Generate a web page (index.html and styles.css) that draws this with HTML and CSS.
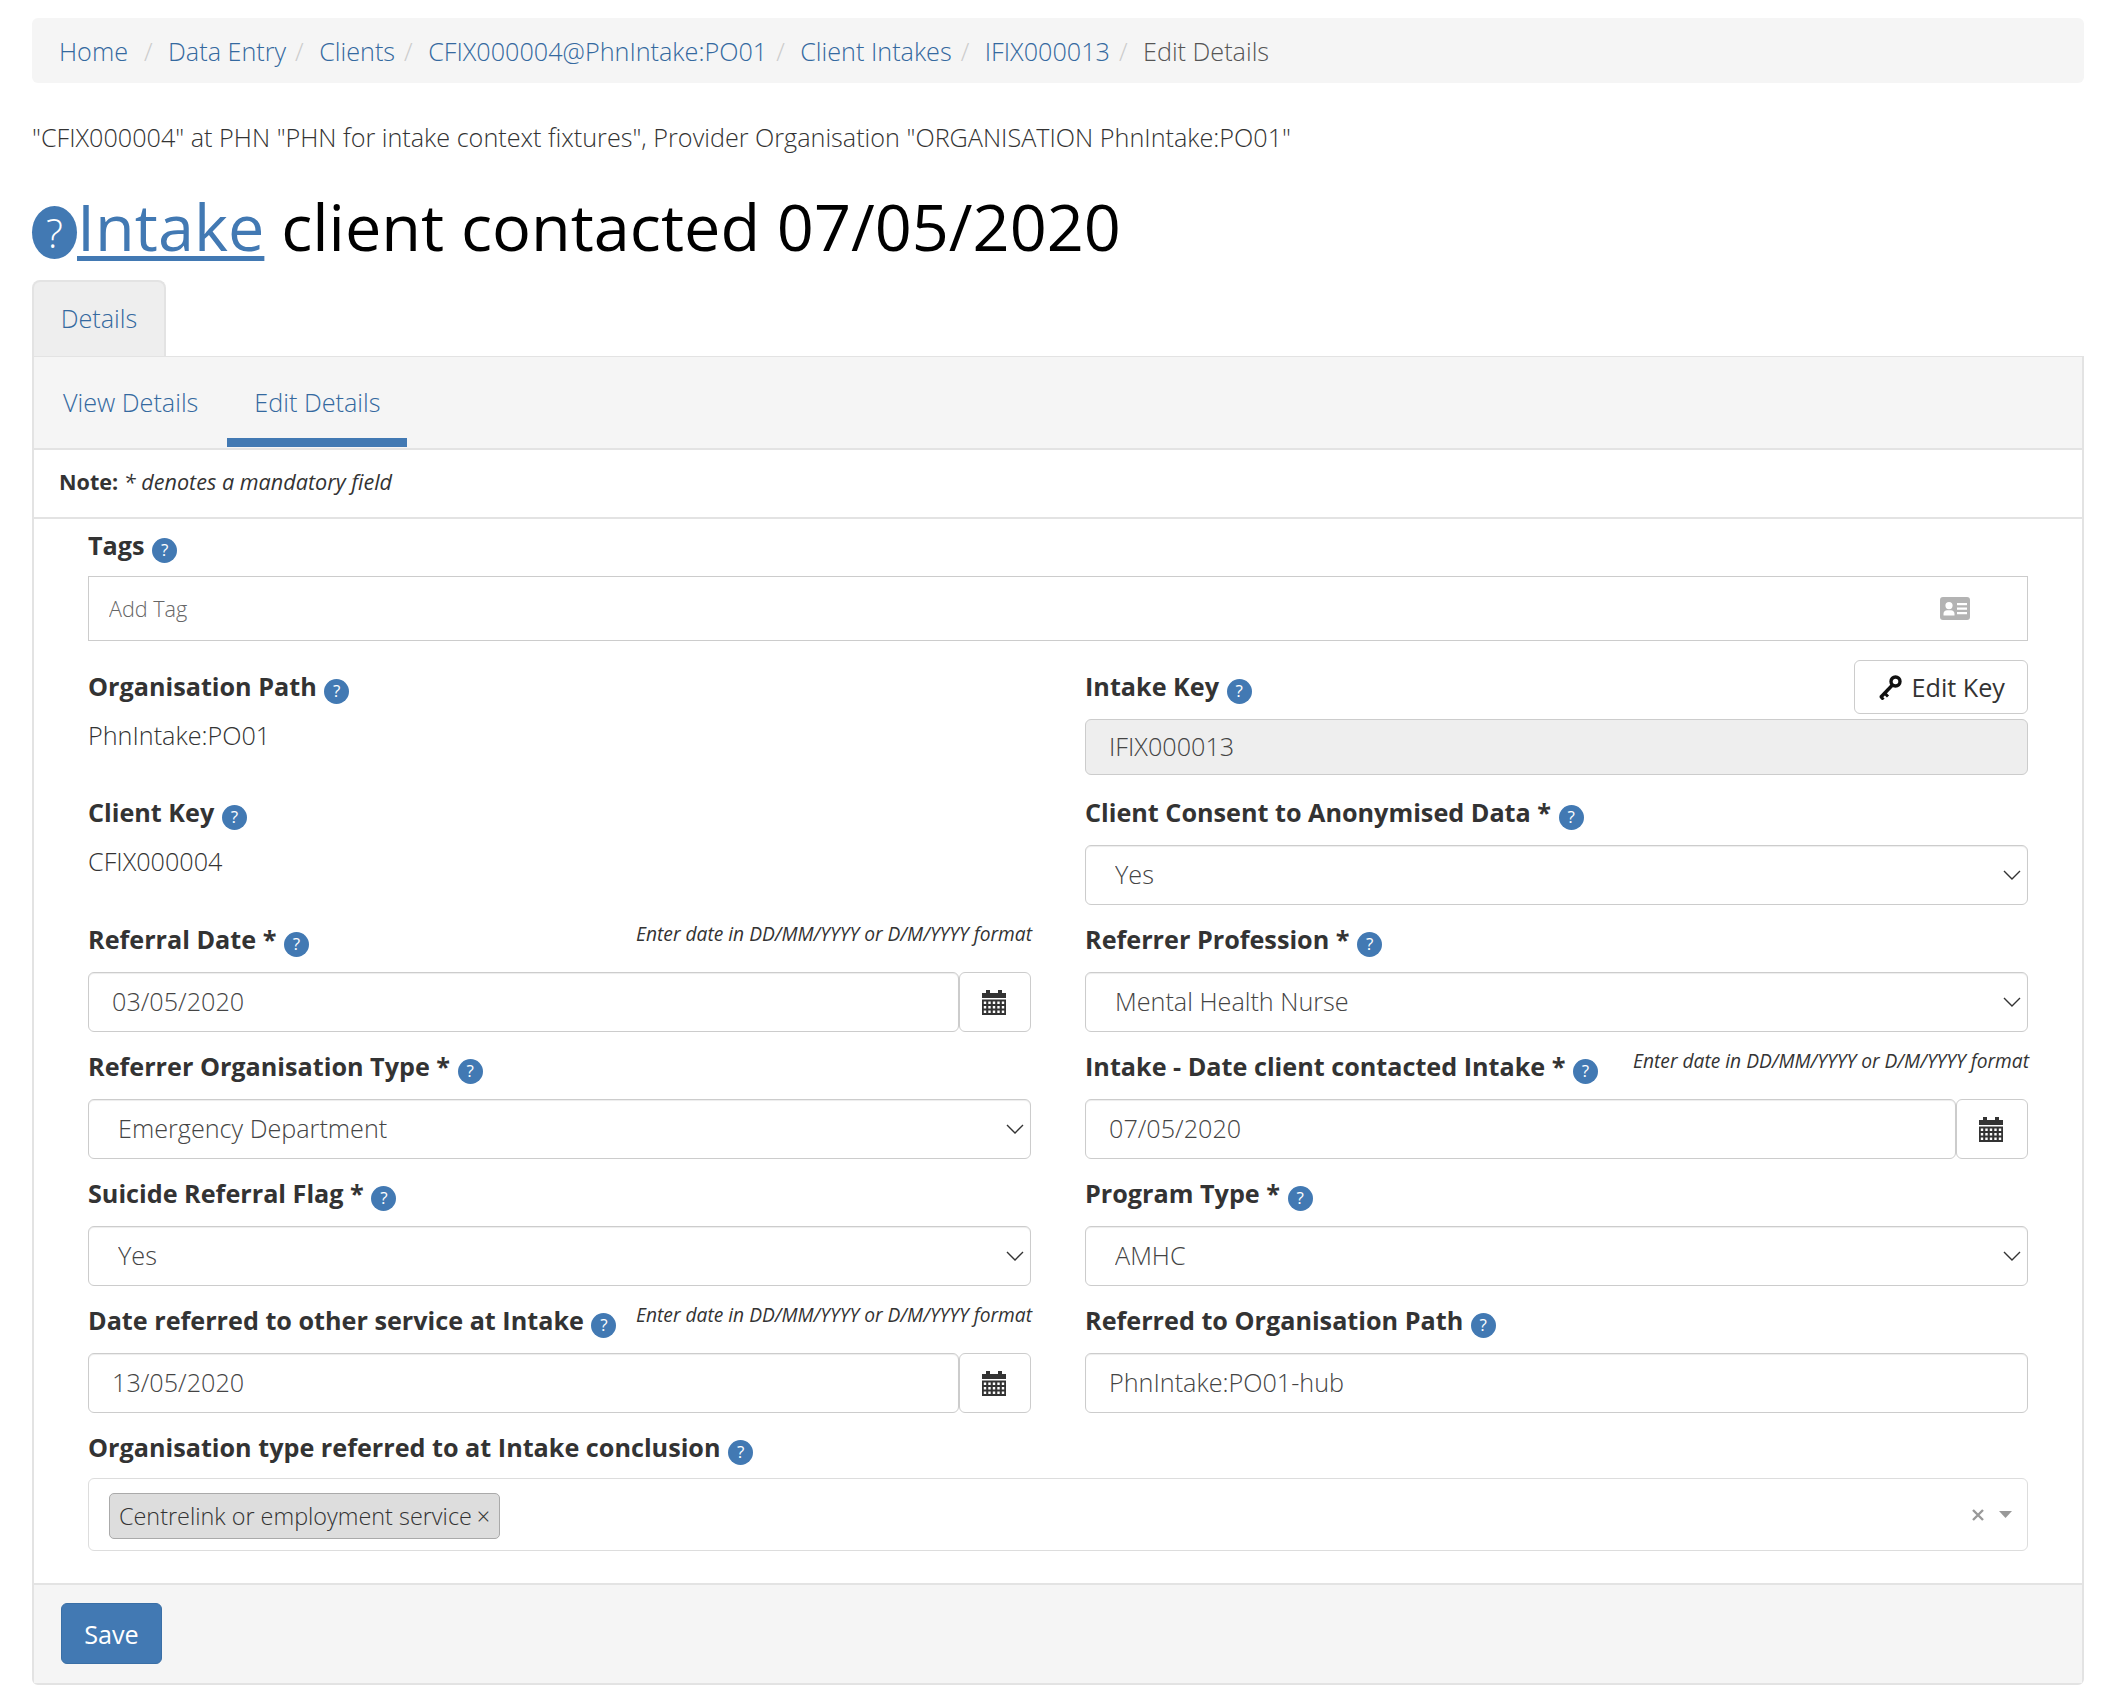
FILE: index.html
```html
<!DOCTYPE html>
<html lang="en">

<head>
    <meta charset="UTF-8">
    <title>Edit Details</title>
    <link rel="stylesheet" href="styles.css">
</head>

<body>
    <ol class="breadcrumb">
        <li><a href="#">Home</a></li>
        <li><a href="#">Data Entry</a></li>
        <li><a href="#">Clients</a></li>
        <li><a href="#">CFIX000004@PhnIntake:PO01</a></li>
        <li><a href="#">Client Intakes</a></li>
        <li><a href="#">IFIX000013</a></li>
        <li class="current">Edit Details</li>
    </ol>

    <p class="context">"CFIX000004" at PHN "PHN for intake context fixtures", Provider Organisation "ORGANISATION PhnIntake:PO01"</p>

    <h1 class="title"><span class="help help-big">?</span><a href="#">Intake</a> client contacted 07/05/2020</h1>

    <div class="tabs">
        <a class="tab" href="#">Details</a>
    </div>

    <div class="panel">
        <div class="subnav">
            <a class="subtab" href="#">View Details</a>
            <a class="subtab active" href="#">Edit Details</a>
        </div>
        <div class="note"><b>Note:</b> <i>* denotes a mandatory field</i></div>

        <form class="form">
            <div class="field tags-field">
                <div class="label-row"><label>Tags <span class="help">?</span></label></div>
                <div class="tag-input">
                    <input type="text" placeholder="Add Tag">
                    <svg class="card-icon" width="30" height="23" viewBox="0 0 30 23">
                        <path fill="#b3b3b3" fill-rule="evenodd" d="M3 0h24a3 3 0 0 1 3 3v17a3 3 0 0 1-3 3H3a3 3 0 0 1-3-3V3a3 3 0 0 1 3-3zM9 5a3.6 3.6 0 1 0 0 7.2A3.6 3.6 0 0 0 9 5zM3.5 18.500h11v-1.800c0-2-1.700-3.400-3.500-3.400H7c-1.800 0-3.500 1.400-3.500 3.400zM17 6v2.300h10V6zM17 10.500v2.300h10v-2.300zM17 15v2.300h10V15z" />
                    </svg>
                </div>
            </div>

            <div class="grid">
                <div class="field first">
                    <div class="label-row"><label>Organisation Path <span class="help">?</span></label></div>
                    <div class="static">PhnIntake:PO01</div>
                </div>
                <div class="field first">
                    <div class="label-row">
                        <label>Intake Key <span class="help">?</span></label>
                        <button class="edit-key" type="button">
                            <svg width="24" height="25" viewBox="0 0 24 25">
                                <circle cx="17.500" cy="6.500" r="4.500" fill="none" stroke="#111" stroke-width="3.400" />
                                <path d="M14 10.500L2.500 22.500" fill="none" stroke="#111" stroke-width="3.400" />
                                <path d="M6.500 18l3.500 3.500M2.500 21.500l3 3" fill="none" stroke="#111" stroke-width="3" />
                            </svg>
                            Edit Key
                        </button>
                    </div>
                    <input class="control key-input" type="text" value="IFIX000013" disabled>
                </div>

                <div class="field">
                    <div class="label-row"><label>Client Key <span class="help">?</span></label></div>
                    <div class="static">CFIX000004</div>
                </div>
                <div class="field">
                    <div class="label-row"><label>Client Consent to Anonymised Data * <span class="help">?</span></label></div>
                    <select class="control select"><option>Yes</option></select>
                </div>

                <div class="field">
                    <div class="label-row">
                        <label>Referral Date * <span class="help">?</span></label>
                        <span class="hint">Enter date in DD/MM/YYYY or D/M/YYYY format</span>
                    </div>
                    <div class="date-group">
                        <input class="control" type="text" value="03/05/2020">
                        <button class="cal-btn" type="button">
                            <svg width="24" height="25" viewBox="0 0 24 25"><use href="#cal" /></svg>
                        </button>
                    </div>
                </div>
                <div class="field">
                    <div class="label-row"><label>Referrer Profession * <span class="help">?</span></label></div>
                    <select class="control select"><option>Mental Health Nurse</option></select>
                </div>

                <div class="field">
                    <div class="label-row"><label>Referrer Organisation Type * <span class="help">?</span></label></div>
                    <select class="control select"><option>Emergency Department</option></select>
                </div>
                <div class="field">
                    <div class="label-row">
                        <label>Intake - Date client contacted Intake * <span class="help">?</span></label>
                        <span class="hint">Enter date in DD/MM/YYYY or D/M/YYYY format</span>
                    </div>
                    <div class="date-group">
                        <input class="control" type="text" value="07/05/2020">
                        <button class="cal-btn" type="button">
                            <svg width="24" height="25" viewBox="0 0 24 25"><use href="#cal" /></svg>
                        </button>
                    </div>
                </div>

                <div class="field">
                    <div class="label-row"><label>Suicide Referral Flag * <span class="help">?</span></label></div>
                    <select class="control select"><option>Yes</option></select>
                </div>
                <div class="field">
                    <div class="label-row"><label>Program Type * <span class="help">?</span></label></div>
                    <select class="control select"><option>AMHC</option></select>
                </div>

                <div class="field">
                    <div class="label-row">
                        <label>Date referred to other service at Intake <span class="help">?</span></label>
                        <span class="hint">Enter date in DD/MM/YYYY or D/M/YYYY format</span>
                    </div>
                    <div class="date-group">
                        <input class="control" type="text" value="13/05/2020">
                        <button class="cal-btn" type="button">
                            <svg width="24" height="25" viewBox="0 0 24 25"><use href="#cal" /></svg>
                        </button>
                    </div>
                </div>
                <div class="field">
                    <div class="label-row"><label>Referred to Organisation Path <span class="help">?</span></label></div>
                    <input class="control" type="text" value="PhnIntake:PO01-hub">
                </div>
            </div>

            <div class="field last">
                <div class="label-row"><label>Organisation type referred to at Intake conclusion <span class="help">?</span></label></div>
                <div class="multi">
                    <span class="chip">Centrelink or employment service <span class="chip-x">×</span></span>
                    <span class="multi-actions">
                        <svg width="12" height="12" viewBox="0 0 12 12"><path d="M1 1l10 10M11 1L1 11" stroke="#999" stroke-width="2.400" /></svg>
                        <svg width="13" height="7" viewBox="0 0 13 7"><path d="M0 0h13L6.500 7z" fill="#999" /></svg>
                    </span>
                </div>
            </div>
        </form>

        <div class="footer">
            <button class="save" type="button">Save</button>
        </div>
    </div>

    <svg class="defs" width="0" height="0">
        <symbol id="cal" viewBox="0 0 24 25">
            <path fill="#333" fill-rule="evenodd" d="M4 0h4v3h8V0h4v3h4v5H0V3h4zM0 9.500h24V25H0zM1.800 11.500v2.600h2.400v-2.600zM6.300 11.500v2.600h2.400v-2.600zM10.800 11.500v2.600h2.400v-2.600zM15.300 11.500v2.600h2.400v-2.600zM19.800 11.500v2.600h2.400v-2.600zM1.800 16v2.600h2.400V16zM6.300 16v2.600h2.400V16zM10.800 16v2.600h2.400V16zM15.300 16v2.600h2.400V16zM19.800 16v2.600h2.400V16zM1.800 20.500v2.600h2.400v-2.600zM6.300 20.500v2.600h2.400v-2.600zM10.800 20.500v2.600h2.400v-2.600zM15.300 20.500v2.600h2.400v-2.600zM19.800 20.500v2.600h2.400v-2.600z" />
        </symbol>
    </svg>
</body>

</html>
```

FILE: styles.css
```css
* {
    box-sizing: border-box;
}

body {
    font-family: "Open Sans", sans-serif;
    font-size: 25.2px;
    font-weight: 300;
    color: #333;
    background-color: #fff;
    margin: 0;
    padding: 18px 40px 0 32px;
}

a {
    color: #34699f;
    text-decoration: none;
}

.breadcrumb {
    display: flex;
    align-items: center;
    height: 65px;
    margin: 0;
    padding: 0 27px;
    list-style: none;
    background-color: #f5f5f5;
    border-radius: 6px;
}

.breadcrumb li + li::before {
    content: "/";
    color: #ccc;
    padding: 0 15.500px 0 9px;
}

.breadcrumb li:nth-child(2)::before {
    padding-left: 16px;
}

.breadcrumb .current {
    color: #555;
}

.context {
    margin: 0;
    padding-top: 36px;
    line-height: 36px;
}

.title {
    display: flex;
    align-items: flex-start;
    margin: 0;
    padding-top: 31px;
    height: 125px;
    font-size: 64.8px;
    font-weight: 400;
    line-height: 80px;
    color: #000;
    white-space: pre;
}

.title a {
    color: #4279b3;
    text-decoration: underline;
    text-decoration-thickness: 5px;
    text-underline-offset: 5px;
}

.help {
    display: inline-flex;
    align-items: center;
    justify-content: center;
    width: 25px;
    height: 25px;
    border-radius: 50%;
    background-color: #4279b3;
    color: #fff;
    font-size: 17px;
    font-weight: 400;
    vertical-align: -1px;
    margin-left: 1px;
}

.help-big {
    width: 45px;
    height: 53px;
    margin: 20px 0 0;
    font-size: 40px;
    font-weight: 300;
}

.tabs {
    display: flex;
    height: 76px;
}

.tab {
    display: flex;
    align-items: center;
    justify-content: center;
    width: 134px;
    height: 76px;
    padding-bottom: 2px;
    background-color: #eee;
    border: 2px solid #e3e3e3;
    border-bottom: none;
    border-radius: 8px 8px 0 0;
}

.panel {
    border: 2px solid #e3e3e3;
    border-top-width: 1px;
    border-radius: 0 0 6px 6px;
}

.subnav {
    display: flex;
    gap: 2px;
    height: 93px;
    padding-left: 2px;
    background-color: #f5f5f5;
    border-bottom: 2px solid #e3e3e3;
}

.subtab {
    display: flex;
    align-items: center;
    height: 90px;
    padding: 9px 27px 0;
    border-bottom: 9px solid transparent;
}

.subtab.active {
    border-bottom-color: #4279b3;
}

.note {
    height: 69px;
    padding: 17px 0 0 25px;
    font-size: 21.6px;
    line-height: 30px;
    border-bottom: 2px solid #e3e3e3;
}

.note b {
    font-weight: 700;
}

.note i {
    font-weight: 400;
}

.form {
    padding: 8px 54px 0 54px;
}

.field {
    margin-bottom: 16px;
    min-width: 0;
}

.tags-field {
    margin-bottom: 27px;
}

.tags-field .label-row {
    margin-bottom: 13px;
}

.first {
    margin-bottom: 19px;
}

.last {
    margin-bottom: 0;
}

.last .label-row {
    margin-bottom: 13px;
}

.label-row {
    display: flex;
    justify-content: space-between;
    align-items: flex-start;
    height: 36px;
    margin-bottom: 15px;
    white-space: nowrap;
}

label {
    font-weight: 700;
    line-height: 36px;
}

.hint {
    font-size: 19.2px;
    font-style: italic;
    font-weight: 400;
    line-height: 26px;
    margin-right: -1px;
    color: #333;
}

.grid {
    display: grid;
    grid-template-columns: 1fr 1fr;
    column-gap: 54px;
}

.static {
    height: 56px;
    margin-top: -3px;
    padding-top: 1px;
    line-height: 36px;
}

.control {
    display: block;
    width: 100%;
    height: 60px;
    padding: 0 23px 2px;
    font-family: inherit;
    font-size: 25.2px;
    font-weight: 300;
    color: #444;
    background-color: #fff;
    border: 1px solid #ccc;
    border-radius: 6px;
    box-shadow: inset 0 1px 1px rgba(0, 0, 0, 0.075);
}

.select {
    appearance: none;
    padding-left: 29px;
    background-image: url("data:image/svg+xml,%3Csvg xmlns='http://www.w3.org/2000/svg' width='18' height='10'%3E%3Cpath d='M1 1l8 8 8-8' fill='none' stroke='%23333' stroke-width='1.400'/%3E%3C/svg%3E");
    background-repeat: no-repeat;
    background-position: right 6px center;
}

.key-input {
    height: 56px;
    margin-top: 5px;
    background-color: #eee;
    box-shadow: none;
    opacity: 1;
}

.edit-key {
    display: flex;
    align-items: center;
    gap: 10px;
    height: 54px;
    margin-top: -8px;
    padding: 0 22px 0 23px;
    font-family: inherit;
    font-size: 25.2px;
    font-weight: 400;
    color: #333;
    background-color: #fff;
    border: 1px solid #ccc;
    border-radius: 6px;
}

.date-group {
    display: flex;
}

.date-group .control {
    flex: 1;
    min-width: 0;
}

.cal-btn {
    display: flex;
    align-items: center;
    justify-content: center;
    flex: none;
    width: 72px;
    height: 60px;
    padding: 0 2px 0 0;
    background-color: #fff;
    border: 1px solid #ccc;
    border-radius: 6px;
}

.tag-input {
    display: flex;
    align-items: center;
    height: 65px;
    padding-right: 57px;
    border: 1px solid #ccc;
}

.tag-input input {
    flex: 1;
    min-width: 0;
    padding: 0 20px;
    border: none;
    outline: none;
    font-family: inherit;
    font-size: 21.6px;
    font-weight: 300;
}

.tag-input input::placeholder {
    color: #666;
}

.multi {
    display: flex;
    align-items: center;
    justify-content: space-between;
    height: 73px;
    padding: 3px 15px 0 20px;
    border: 1px solid #ddd;
    border-radius: 6px;
}

.chip {
    display: flex;
    align-items: center;
    height: 46px;
    padding: 0 9px;
    font-size: 23.4px;
    color: #333;
    background-color: #ddd;
    border: 1px solid #aaa;
    border-radius: 5px;
}

.chip-x {
    margin-left: 5px;
}

.multi-actions {
    display: flex;
    align-items: center;
    gap: 15px;
    margin-top: -3px;
}

.footer {
    height: 100px;
    margin-top: 32px;
    padding: 18px 0 0 27px;
    background-color: #f5f5f5;
    border-top: 2px solid #e3e3e3;
}

.save {
    width: 101px;
    height: 61px;
    font-family: inherit;
    font-size: 25.2px;
    font-weight: 400;
    color: #fff;
    background-color: #4279b3;
    border: 1px solid #3a6fa6;
    border-radius: 6px;
}

.defs {
    position: absolute;
}
```
